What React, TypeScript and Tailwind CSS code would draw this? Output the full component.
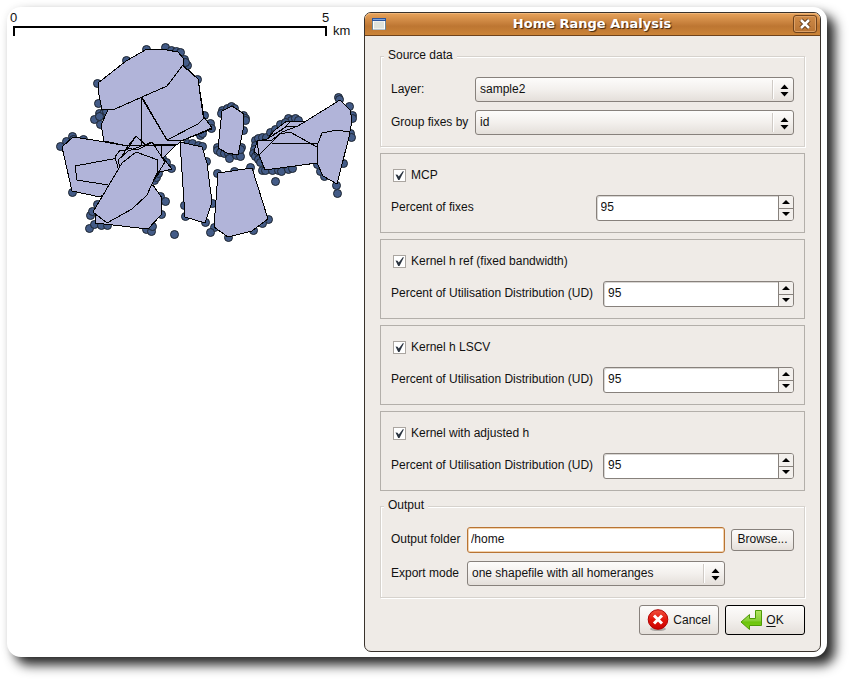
import { useState } from "react";
import type { ReactNode } from "react";

const FIX_POINTS: [number, number][] = [
  [97, 83], [126, 60], [146, 49], [165, 47], [171, 50], [176, 51], [180, 52], [184, 59], [187, 65], [185, 62], [197, 79],
  [98, 103], [99, 113], [103, 113], [106, 111], [94, 119], [99, 116], [100, 124], [204, 115], [210, 123], [211, 128],
  [60, 146], [66, 141], [72, 136], [73, 139], [83, 139], [72, 192],
  [90, 215], [89, 228], [92, 211], [94, 224], [97, 204], [101, 225], [107, 225], [146, 229], [151, 231], [152, 226], [161, 214],
  [160, 196], [165, 201], [174, 234], [162, 158], [166, 162], [171, 168], [154, 180], [156, 177], [158, 173],
  [200, 135], [202, 133], [187, 143], [192, 143], [198, 145], [202, 146], [206, 161], [212, 203], [205, 222], [185, 216], [184, 205],
  [222, 110], [221, 113], [227, 108], [231, 106], [234, 108], [243, 115], [245, 118], [245, 120], [243, 130],
  [217, 147], [217, 150], [220, 152], [224, 153], [228, 153], [229, 158], [236, 155], [240, 156], [241, 147], [240, 149],
  [217, 173], [234, 171], [250, 167], [268, 219], [262, 223], [253, 230], [228, 237], [214, 227], [210, 232],
  [255, 140], [258, 138], [262, 137], [266, 137], [270, 132], [275, 129], [280, 124], [288, 118], [291, 120], [295, 118], [298, 120],
  [255, 145], [254, 149], [253, 153], [255, 156], [258, 159], [260, 162], [262, 170], [265, 170], [272, 170], [278, 170],
  [281, 171], [288, 169], [292, 168], [275, 181], [338, 97], [339, 99], [349, 106], [352, 115], [352, 118], [350, 133],
  [351, 137], [343, 163], [317, 164], [320, 171], [324, 176], [336, 185], [337, 193], [274, 134], [285, 122], [257, 151],
];

const RANGES = [
  "108,110 101,125 104,141 128,146 141,146 177,145 181,141 212,129 204,117 198,79 183,65",
  "177,144 163,158 172,169 160,172 153,181 130,180 128,146",
  "141,97 167,140 181,141 212,128 204,117 198,124 167,140",
  "182,65 198,79 203,115 204,118 198,124 167,140 142,97 167,86",
  "98,83 126,61 147,49 167,50 178,52 183,58 183,65 167,86 142,97 115,109 102,110 99,95",
  "62,147 73,137 93,140 128,146 140,170 100,197 72,191",
  "75,166 118,158 125,186 108,185 77,180",
  "115,157 120,150 125,150 136,136 147,146 130,172 118,168",
  "118,160 128,151 152,142 165,162 153,181 125,185",
  "153,185 162,198 161,215 148,229 95,223 95,216",
  "136,152 158,160 157,173 147,195 132,209 107,223 93,212 122,163",
  "180,142 202,147 207,163 212,202 205,223 185,217",
  "218,173 252,168 268,219 252,231 228,237 214,227",
  "222,111 232,106 244,114 243,130 240,145 238,155 227,153 218,148",
  "254,152 257,141 267,139 275,130 287,121 305,121 300,145 270,160 259,155",
  "257,141 272,140 282,132 298,126 340,100 350,110 352,120 349,137 317,163 265,170 259,155",
  "322,133 337,130 349,132 349,137 337,184 323,176 317,163 317,146",
];

const INNER_LINES = [
  "141,97 141,146",
  "128,146 177,145",
  "121,158 127,148 137,150 151,143",
  "161,145 162,158",
  "136,136 127,150",
  "259,155 280,134 290,132 317,147",
  "272,143 317,143",
  "273,135 287,126 298,126",
  "267,139 283,129 290,122",
];

function MapView() {
  return (
    <svg width="350" height="240" viewBox="7 7 350 240" role="img" aria-label="Home range map" className="block">
      <path d="M14 36V27H326V36" fill="none" stroke="#000" strokeWidth="2" shapeRendering="crispEdges" />
      <g fontFamily="'Liberation Sans', Arial, sans-serif" fontSize="13" fill="#111">
        <text x="10" y="22">0</text>
        <text x="322" y="22">5</text>
        <text x="333" y="35">km</text>
      </g>
      <g fill="#435b87" stroke="#1d2530">
        {FIX_POINTS.map(([x, y], i) => (
          <circle key={i} cx={x + 0.5} cy={y + 0.5} r="4" />
        ))}
      </g>
      <g fill="#b1b4d9" stroke="#000" strokeLinejoin="round" shapeRendering="crispEdges">
        {RANGES.map((points) => (
          <polygon key={points} points={points} />
        ))}
      </g>
      <g fill="none" stroke="#000" shapeRendering="crispEdges">
        {INNER_LINES.map((points) => (
          <polyline key={points} points={points} />
        ))}
      </g>
    </svg>
  );
}

function Group({ title, children }: { title: string; children: ReactNode }) {
  return (
    <fieldset className="min-w-0 border border-[#d6d2cd] px-[10px] pb-[11px] pt-3 shadow-[1px_1px_0_#ffffff,inset_1px_1px_0_#ffffff]">
      <legend className="-ml-[7px] bg-[#efebe7] px-1 pb-[2px] leading-4">{title}</legend>
      {children}
    </fieldset>
  );
}

function Select({ id, options }: { id: string; options: string[] }) {
  return (
    <div className="relative min-w-0">
      <select
        id={id}
        className="block h-[25px] w-full appearance-none rounded-[3px] border border-[#87817c] bg-linear-to-b from-[#fdfcfb] via-[#f3f0ed] to-[#e4dfda] pb-[2px] pl-1 pr-7 text-[#111] outline-none"
      >
        {options.map((option) => (
          <option key={option}>{option}</option>
        ))}
      </select>
      <svg className="pointer-events-none absolute right-0 top-0" width="22" height="25" viewBox="0 0 22 25" aria-hidden="true">
        <path d="M0.5 3V22" stroke="#cfcac5" />
        <path d="M1.5 3V22" stroke="#fff" />
        <path d="M8.500 12L12.500 7.500L16.500 12ZM8.500 15H16.500L12.500 19.500Z" fill="#000" />
      </svg>
    </div>
  );
}

function Spinner({ id }: { id: string }) {
  const [value, setValue] = useState(95);
  const step = (by: number) => setValue((v) => Math.min(100, Math.max(1, v + by)));
  return (
    <div className="flex h-[26px] min-w-0 overflow-hidden rounded-[3px] border border-[#87817c] bg-white shadow-[inset_1px_1px_0_#d9d6d3]">
      <input
        id={id}
        type="number"
        value={value}
        onChange={(e) => setValue(Number(e.target.value))}
        className="w-0 min-w-0 flex-1 appearance-none bg-transparent pb-[2px] pl-1 outline-none [-moz-appearance:textfield] [&::-webkit-inner-spin-button]:appearance-none"
      />
      <div className="flex w-[15px] flex-col divide-y divide-[#87817c] border-l border-[#87817c] bg-[#f3f0ed]">
        <button type="button" aria-label="Increase" onClick={() => step(1)} className="flex flex-1 items-center justify-center">
          <svg width="8" height="4" viewBox="0 0 8 4" aria-hidden="true">
            <path d="M0 4L4 0L8 4Z" />
          </svg>
        </button>
        <button type="button" aria-label="Decrease" onClick={() => step(-1)} className="flex flex-1 items-center justify-center">
          <svg width="8" height="4" viewBox="0 0 8 4" aria-hidden="true">
            <path d="M0 0H8L4 4Z" />
          </svg>
        </button>
      </div>
    </div>
  );
}

function Method({ id, title, label }: { id: string; title: string; label: string }) {
  return (
    <section className="border border-[#b3afaa] px-[10px] pb-[11px] pt-3">
      <div className="flex h-[18px] items-center gap-[5px] pl-[2px]">
        <span className="relative block size-[13px]">
          <input
            id={`${id}-on`}
            type="checkbox"
            defaultChecked
            className="peer block size-[13px] appearance-none border border-[#aaa5a0] bg-white outline-none"
          />
          <svg className="pointer-events-none absolute inset-0 hidden peer-checked:block" width="13" height="13" viewBox="0 0 13 13" aria-hidden="true">
            <path d="M2.500 5.500L4.500 5.800L5.800 7.600L10 2L10.800 2.500L6.500 11H5.200Z" fill="#2b3440" />
          </svg>
        </span>
        <label htmlFor={`${id}-on`}>{title}</label>
      </div>
      <div className="mt-[11px] grid grid-cols-[minmax(max-content,1fr)_1fr] items-center gap-[6px]">
        <label htmlFor={id} className="whitespace-nowrap pb-[2px] pr-1">
          {label}
        </label>
        <Spinner id={id} />
      </div>
    </section>
  );
}

function TitleBar() {
  return (
    <header className="flex h-[23px] items-center rounded-t-[6px] border-b border-[#6f431c] bg-linear-to-b from-[#e8a45c] via-[#bd7632] via-60% to-[#cb8438] pl-[7px] pr-[3px] shadow-[inset_0_1px_0_#efb679]">
      <svg width="14" height="12" viewBox="0 0 14 12" aria-hidden="true">
        <rect x="0.5" y="0.5" width="13" height="11" fill="#dfe3dc" stroke="#6c8796" />
        <rect x="1.500" y="3" width="11" height="8" fill="none" stroke="#fff" />
        <rect width="14" height="3" fill="#2c559c" />
        <path d="M1 1.500H13" stroke="#7ea3d8" />
      </svg>
      <h1 className="flex-1 pl-[5px] text-center font-['DejaVu_Sans',sans-serif] text-[13px] font-bold text-white [text-shadow:1px_1px_1px_#3b2410]">
        Home Range Analysis
      </h1>
      <button
        type="button"
        aria-label="Close"
        className="flex h-[18px] w-6 items-center justify-center rounded-[3px] border border-[#6f431c] bg-linear-to-b from-[#cf8b48] to-[#b87434] shadow-[inset_0_0_0_1px_#dca066]"
      >
        <svg width="12" height="12" viewBox="0 0 12 12" aria-hidden="true">
          <path d="M2 2L10 10M10 2L2 10" stroke="#5b3413" strokeWidth="4.500" />
          <path d="M2 2L10 10M10 2L2 10" stroke="#fff" strokeWidth="2.500" />
        </svg>
      </button>
    </header>
  );
}

function CancelIcon() {
  return (
    <svg width="22" height="22" viewBox="0 0 22 22" aria-hidden="true">
      <defs>
        <linearGradient id="cancel-red" x2="0" y2="1">
          <stop offset="0" stopColor="#f0523f" />
          <stop offset="0.5" stopColor="#e3170c" />
          <stop offset="1" stopColor="#c80000" />
        </linearGradient>
      </defs>
      <ellipse cx="11" cy="20" rx="8" ry="2" fill="#000" opacity="0.25" />
      <circle cx="11" cy="10.500" r="9.800" fill="url(#cancel-red)" stroke="#b00000" />
      <path d="M7 6.500L15 14.500M15 6.500L7 14.500" stroke="#fff" strokeWidth="3" />
    </svg>
  );
}

function OkIcon() {
  return (
    <svg width="22" height="22" viewBox="0 0 22 22" aria-hidden="true">
      <defs>
        <linearGradient id="ok-green" x2="0" y2="1">
          <stop offset="0" stopColor="#b4e364" />
          <stop offset="0.55" stopColor="#86cf35" />
          <stop offset="0.6" stopColor="#6cc40c" />
          <stop offset="1" stopColor="#7fd01a" />
        </linearGradient>
      </defs>
      <path d="M15.500 1.500H21.500V16.500H9.500V20.500L1 13L9.500 5.500V9.500H15.500Z" fill="url(#ok-green)" stroke="#4e9a06" strokeLinejoin="round" />
    </svg>
  );
}

const BUTTON = "rounded-[3px] border bg-linear-to-b from-[#fdfcfb] via-[#f3f0ed] to-[#e4dfda]";
const ROW_LABEL = "whitespace-nowrap pb-[2px]";

export default function App() {
  return (
    <div className="flex min-h-screen bg-white pb-[23px] pl-[7px] pr-[23px] pt-[7px] font-['Liberation_Sans',Arial,sans-serif] text-[12px] leading-[18px] text-[#111]">
      <main className="flex flex-1 items-start rounded-[14px] bg-white pb-[5px] pr-[6px] shadow-[8px_8px_12px_#000000d9,0_0_8px_#00000010]">
        <div className="min-w-0 flex-1 overflow-hidden">
          <MapView />
        </div>
        <form
          onSubmit={(e) => e.preventDefault()}
          className="mt-[5px] w-[457px] shrink-0 rounded-[7px] border border-[#39322c] bg-[#efebe7]"
        >
          <TitleBar />
          <div className="flex flex-col gap-[6px] px-[15px] pb-4 pt-[11px]">
            <Group title="Source data">
              <div className="grid grid-cols-[78px_1fr] items-center gap-x-[6px] gap-y-2">
                <label htmlFor="layer" className={ROW_LABEL}>Layer:</label>
                <Select id="layer" options={["sample2"]} />
                <label htmlFor="group-by" className={ROW_LABEL}>Group fixes by</label>
                <Select id="group-by" options={["id"]} />
              </div>
            </Group>
            <Method id="mcp" title="MCP" label="Percent of fixes" />
            <Method id="kernel-ref" title="Kernel h ref (fixed bandwidth)" label="Percent of Utilisation Distribution (UD)" />
            <Method id="kernel-lscv" title="Kernel h LSCV" label="Percent of Utilisation Distribution (UD)" />
            <Method id="kernel-adj" title="Kernel with adjusted h" label="Percent of Utilisation Distribution (UD)" />
            <Group title="Output">
              <div className="grid grid-cols-[70px_1fr_63px] items-center gap-x-[6px] gap-y-2">
                <label htmlFor="folder" className={ROW_LABEL}>Output folder</label>
                <input
                  id="folder"
                  type="text"
                  defaultValue="/home"
                  className="h-[26px] min-w-0 rounded-[3px] border border-[#b87434] bg-white pb-[2px] pl-[3px] shadow-[inset_0_0_0_1px_#f3d3ae] outline-none"
                />
                <button type="button" className={`${BUTTON} h-[22px] border-[#87817c] pb-[2px]`}>
                  Browse...
                </button>
                <label htmlFor="mode" className={ROW_LABEL}>Export mode</label>
                <Select id="mode" options={["one shapefile with all homeranges"]} />
              </div>
            </Group>
            <div className="flex justify-end gap-[6px] pt-px">
              <button type="button" className={`${BUTTON} flex h-[30px] w-20 items-center justify-center gap-1 border-[#87817c]`}>
                <CancelIcon />
                Cancel
              </button>
              <button type="submit" className={`${BUTTON} flex h-[30px] w-20 items-center justify-center gap-1 border-black pr-[6px]`}>
                <OkIcon />
                <span>
                  <span className="underline underline-offset-2">O</span>K
                </span>
              </button>
            </div>
          </div>
        </form>
      </main>
    </div>
  );
}
